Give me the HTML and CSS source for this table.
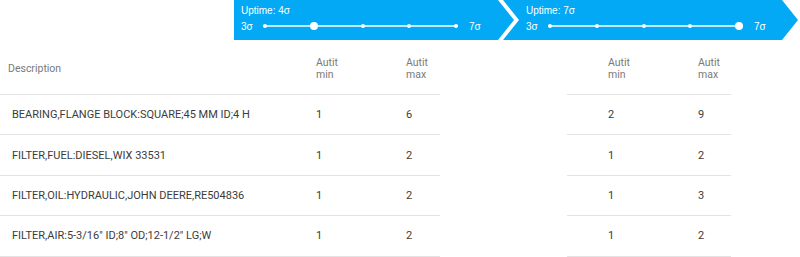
FILE: index.html
```html
<!DOCTYPE html>
<html lang="en">
<head>
  <meta charset="UTF-8">
  <title>Autit limits</title>
  <link rel="stylesheet" href="styles.css">
</head>
<body>
  <!-- Uptime steps -->
  <div class="steps">
    <div class="step first">
      <div class="step-title">Uptime: 4σ</div>
      <div class="slider">
        <span class="slider-label">3σ</span>
        <div class="track">
          <span class="dot"></span>
          <span class="dot active"></span>
          <span class="dot"></span>
          <span class="dot"></span>
          <span class="dot"></span>
        </div>
        <span class="slider-label">7σ</span>
      </div>
    </div>
    <div class="step second">
      <div class="step-title">Uptime: 7σ</div>
      <div class="slider">
        <span class="slider-label">3σ</span>
        <div class="track">
          <span class="dot"></span>
          <span class="dot"></span>
          <span class="dot"></span>
          <span class="dot"></span>
          <span class="dot active"></span>
        </div>
        <span class="slider-label">7σ</span>
      </div>
    </div>
  </div>

  <!-- Tablas -->
  <div class="sheet">
    <div class="grid main">
      <div class="cell head desc">Description</div>
      <div class="cell head num">Autit<br>min</div>
      <div class="cell head num">Autit<br>max</div>

      <div class="cell desc">BEARING,FLANGE BLOCK:SQUARE;45 MM ID;4 H</div>
      <div class="cell num">1</div>
      <div class="cell num">6</div>

      <div class="cell desc">FILTER,FUEL:DIESEL,WIX 33531</div>
      <div class="cell num">1</div>
      <div class="cell num">2</div>

      <div class="cell desc">FILTER,OIL:HYDRAULIC,JOHN DEERE,RE504836</div>
      <div class="cell num">1</div>
      <div class="cell num">2</div>

      <div class="cell desc">FILTER,AIR:5-3/16" ID;8" OD;12-1/2" LG;W</div>
      <div class="cell num">1</div>
      <div class="cell num">2</div>
    </div>

    <div class="grid side">
      <div class="cell head num">Autit<br>min</div>
      <div class="cell head num">Autit<br>max</div>

      <div class="cell num">2</div>
      <div class="cell num">9</div>

      <div class="cell num">1</div>
      <div class="cell num">2</div>

      <div class="cell num">1</div>
      <div class="cell num">3</div>

      <div class="cell num">1</div>
      <div class="cell num">2</div>
    </div>
  </div>
</body>
</html>
```

FILE: styles.css
```css
:root {
  --blue: #03a9f4;
  --line: #e3e3e3;
  --text-dark: #3c3c3c;
  --text-light: #7a7a7a;
}

* {
  margin: 0;
  padding: 0;
  box-sizing: border-box;
}

body {
  font-family: Roboto, 'Liberation Sans', sans-serif;
  background: #fff;
  width: 800px;
  height: 257px;
  overflow: hidden;
}

/* Steps */
.steps {
  display: flex;
  height: 40px;
  padding-left: 234px;
}

.step {
  background: var(--blue);
  color: #fff;
  height: 40px;
  padding-top: 5px;
}

.step.first {
  width: 280px;
  padding-left: 7px;
  clip-path: polygon(0 0, 264px 0, 280px 20px, 264px 40px, 0 40px);
}

.step.second {
  width: 295px;
  margin-left: -11px;
  padding-left: 23px;
  clip-path: polygon(0 0, 279px 0, 295px 20px, 279px 40px, 0 40px, 16px 20px);
}

.step-title {
  font-family: 'Liberation Sans', Arial, sans-serif;
  font-size: 10px;
  line-height: 12px;
}

.slider {
  display: flex;
  align-items: center;
  height: 16px;
  margin-top: 1px;
}

.slider-label {
  font-family: 'Liberation Sans', Arial, sans-serif;
  font-size: 10px;
}

.slider-label:first-child {
  width: 22px;
}

.track {
  width: 195px;
  height: 8px;
  display: flex;
  justify-content: space-between;
  align-items: center;
  background: linear-gradient(rgba(255,255,255,0.75), rgba(255,255,255,0.75)) center / 100% 2px no-repeat;
  margin-right: 11px;
}

.dot {
  width: 4px;
  height: 4px;
  border-radius: 50%;
  background: #fff;
}

.dot.active {
  width: 8px;
  height: 8px;
}

/* Tablas */
.sheet {
  display: flex;
  gap: 127px;
}

.grid {
  display: grid;
  grid-template-rows: 55px;
  grid-auto-rows: 40.4px;
}

.main {
  grid-template-columns: 275px 90px 75px;
}

.side {
  grid-template-columns: 90px 74px;
}

.cell {
  display: flex;
  align-items: center;
  border-bottom: 1px solid var(--line);
  font-size: 11px;
  color: var(--text-dark);
}

.cell.head {
  font-size: 10.5px;
  line-height: 12px;
  color: var(--text-light);
  padding-top: 4px;
}

.desc {
  padding-left: 12px;
}

.desc.head {
  padding-left: 8px;
}

.num {
  padding-left: 41px;
}
```
